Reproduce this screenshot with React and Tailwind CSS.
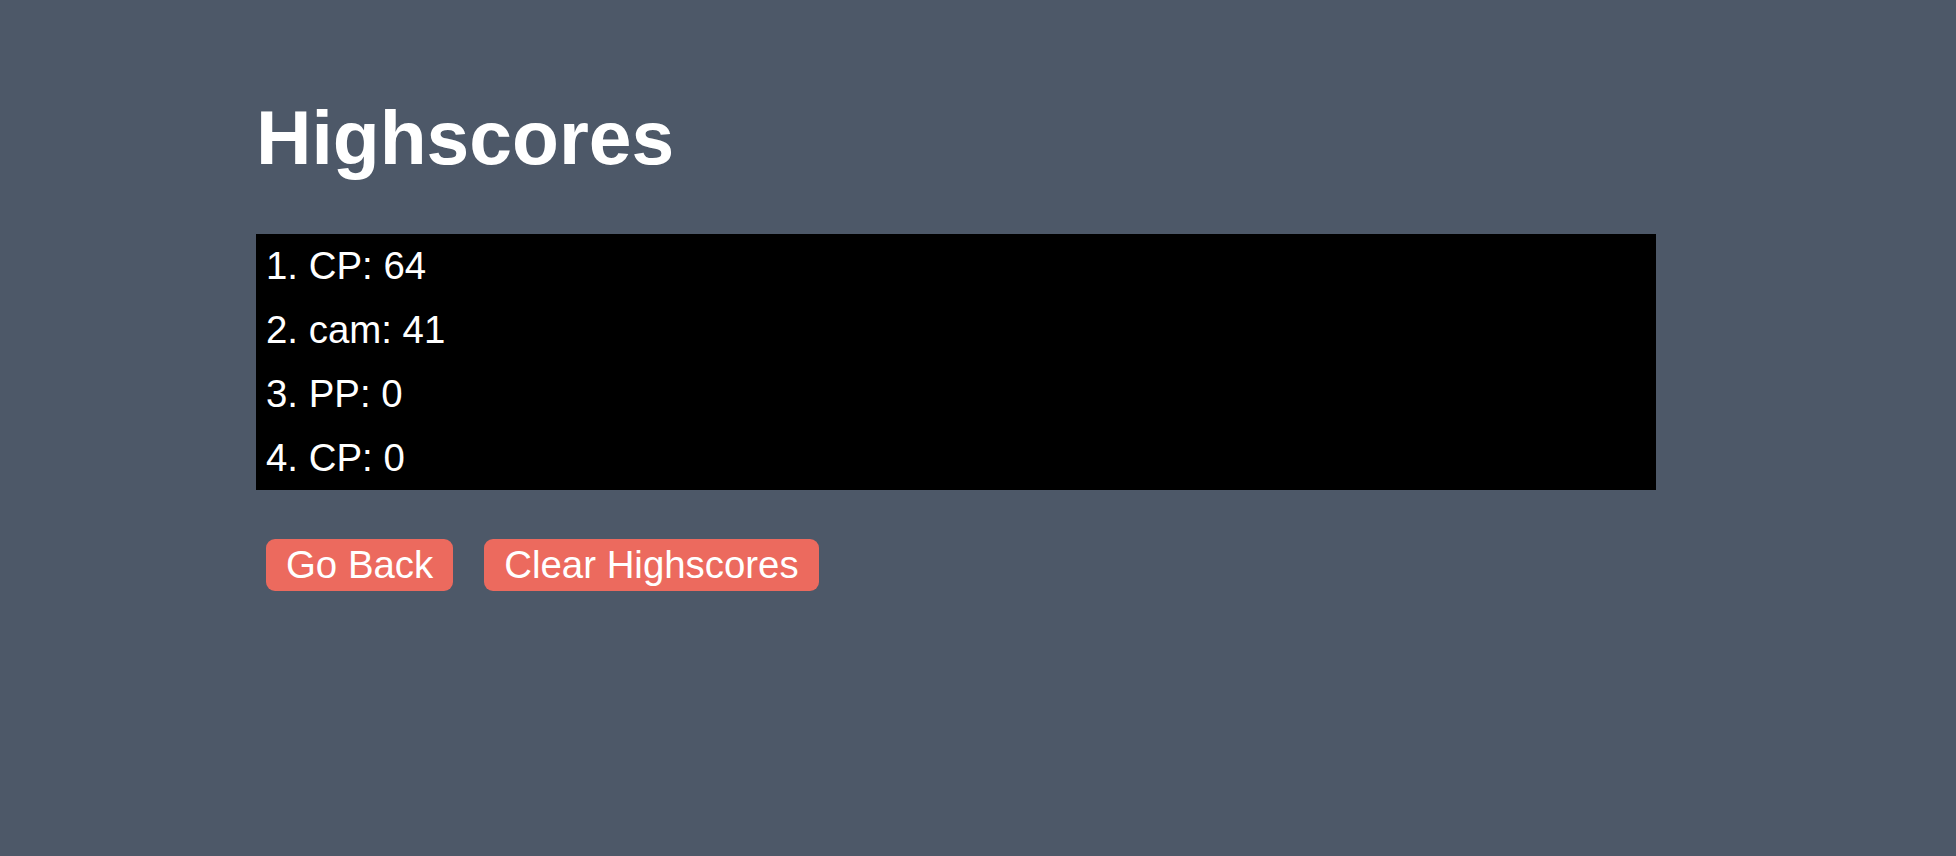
const scores = [
  { name: "CP", score: 64 },
  { name: "cam", score: 41 },
  { name: "PP", score: 0 },
  { name: "CP", score: 0 },
]

export default function App() {
  return (
    <div className="min-h-screen w-full bg-[#4d5868] text-white font-['Liberation_Sans',Arial,sans-serif]">
      <div className="pl-[256px] pt-[95px]">
        <h1 className="text-[76.8px] font-bold leading-[84px]">Highscores</h1>

        <ul className="mt-[55px] w-[1400px] bg-black pl-[10px]">
          {scores.map((s, i) => (
            <li key={i} className="text-[38.4px] leading-[64px]">
              {i + 1}. {s.name}: {s.score}
            </li>
          ))}
        </ul>

        <div className="mt-[49px] ml-[10px] flex gap-[31px]">
          <button className="h-[52px] rounded-[9px] bg-[#ec6a5e] px-[20px] text-[38.4px] leading-[52px] text-white">
            Go Back
          </button>
          <button className="h-[52px] rounded-[9px] bg-[#ec6a5e] px-[20px] text-[38.4px] leading-[52px] text-white">
            Clear Highscores
          </button>
        </div>
      </div>
    </div>
  )
}
